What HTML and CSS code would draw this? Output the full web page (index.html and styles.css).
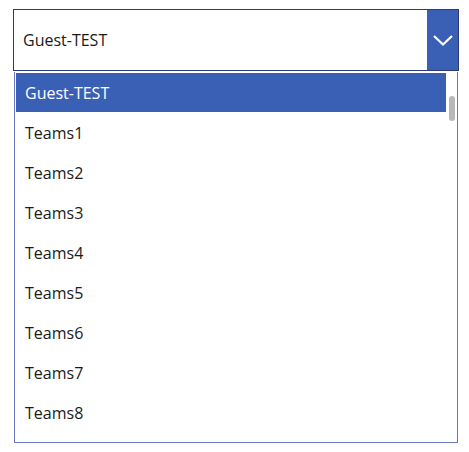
FILE: index.html
```html
<!DOCTYPE html>
<html>
<head>
<meta charset="utf-8">
<link rel="stylesheet" href="styles.css">
</head>
<body>
<div class="combo">
  <div class="field">
    <span class="value">Guest-TEST</span>
    <div class="btn">
      <svg width="20" height="11" viewBox="0 0 20 11"><path d="M1 1 L10 9.5 L19 1" fill="none" stroke="#fff" stroke-width="2.2"/></svg>
    </div>
  </div>
  <div class="list">
    <div class="items">
      <div class="item selected">Guest-TEST</div>
      <div class="item">Teams1</div>
      <div class="item">Teams2</div>
      <div class="item">Teams3</div>
      <div class="item">Teams4</div>
      <div class="item">Teams5</div>
      <div class="item">Teams6</div>
      <div class="item">Teams7</div>
      <div class="item">Teams8</div>
    </div>
    <div class="scroll"><div class="thumb"></div></div>
  </div>
</div>
</body>
</html>
```
FILE: styles.css
```css
html, body { margin: 0; padding: 0; background: #fff; }
body { font-family: "Open Sans", "Noto Sans", sans-serif; font-size: 16px; color: #1a1a1a; }
.combo { padding: 9px 0 0 13px; width: 446px; }
.field {
  border: 1px solid #2e3a78; display: flex; align-items: stretch;
  box-sizing: border-box; height: 62px; width: 446px;
}
.value { flex: 1; display: flex; align-items: center; padding-left: 9px; }
.btn { width: 31px; background: #3a60b5; display: flex; align-items: center; justify-content: center; }
.list {
  margin: 1px 0 0 1px; width: 444px; height: 371px; box-sizing: border-box;
  border: 1px solid #6a78c0; border-top: none; display: flex; padding: 1px 0 0 1px;
}
.items { flex: 1; }
.item { height: 40px; display: flex; align-items: center; padding-left: 9px; }
.selected { background: #3a60b5; color: #fff; height: 39px; margin-bottom: 1px; }
.scroll { width: 11px; padding-top: 23px; display: flex; justify-content: center; }
.thumb { width: 6px; height: 25px; background: #b8b8b8; border-radius: 3px; }
```
